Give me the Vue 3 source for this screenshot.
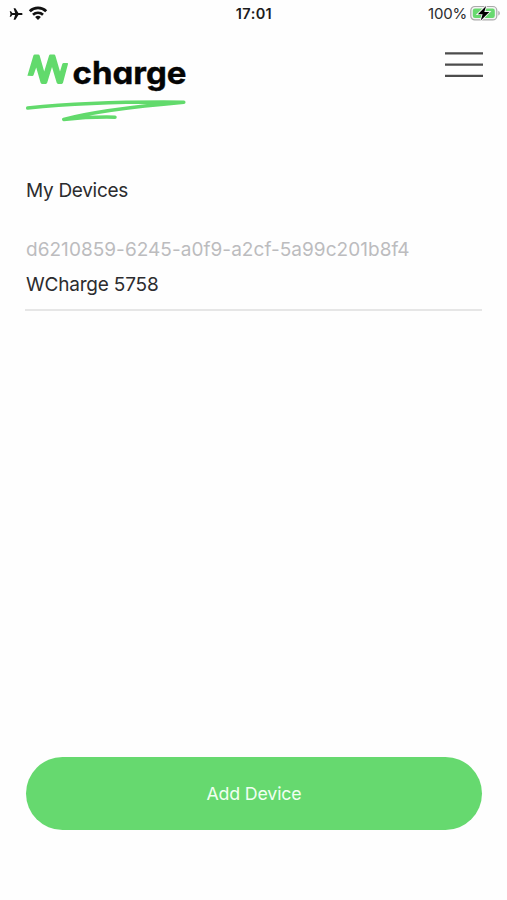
<template>
  <div class="screen">
    <header class="status-bar">
      <div class="status-left">
        <svg width="14" height="14" viewBox="0 0 14 14">
          <path
            d="M13.6 7c0 .7-.7 1.1-1.5 1.1H9.4l-3 4.6H4.6L6.1 8.1H3.3L2 9.7H.7L1.5 7 .7 4.3H2l1.3 1.6h2.8L4.6 1.3h1.8l3 4.6h2.7c.8 0 1.5.4 1.5 1.1z"
            fill="#111"
          />
        </svg>
        <svg width="20" height="15" viewBox="0 0 20 15">
          <path d="M1.8 5.2a11.8 11.8 0 0 1 16.4 0" fill="none" stroke="#111" stroke-width="2.8" />
          <path d="M5 8.7a7.2 7.2 0 0 1 10 0" fill="none" stroke="#111" stroke-width="2.6" />
          <path d="M10 14 7.1 11.1a4.1 4.1 0 0 1 5.8 0z" fill="#111" />
        </svg>
      </div>
      <div class="status-time">17:01</div>
      <div class="status-right">
        <span class="battery-text">100%</span>
        <svg width="31" height="17" viewBox="0 0 31 17">
          <rect x=".8" y="1.5" width="26" height="13.4" rx="4" fill="#f4f4f4" stroke="#aaa" stroke-width="1.2" />
          <rect x="2.8" y="3.5" width="22" height="9.4" rx="2.2" fill="#68d96f" />
          <path d="M28.3 5.8c2 .8 2 4 0 4.8z" fill="#aaa" />
          <path
            d="M16.1 1 7.9 9.2h4.7l-1.9 6.4 8.6-8.6h-5z"
            fill="#000"
            stroke="#f4f4f4"
            stroke-width="1.8"
            paint-order="stroke"
          />
        </svg>
      </div>
    </header>

    <nav class="top-bar">
      <svg class="logo" width="164" height="76" viewBox="0 0 164 76">
        <path
          d="M3.4 28.8 9.4 8.6Q9.7 7.6 10.8 7.6H14.2Q15.4 7.6 15.7 8.7L20.2 24.5 25 8.7Q25.3 7.6 26.4 7.6H30Q31.1 7.6 31.4 8.7L36 24.5 38.3 17Q38.6 16 39.7 16H43.2Q44.3 16 44 17.1L39 35.8Q38.7 36.9 37.6 36.9H34.2Q33 36.9 32.7 35.8L28 20 23.2 35.8Q22.9 36.9 21.8 36.9H18Q16.9 36.9 16.6 35.8L12.2 20.5 9.6 27.9Q9.3 29 8.2 29z"
          fill="#62da6c"
        />
        <text class="logo-text" x="48.5" y="37.3" textLength="114" lengthAdjust="spacingAndGlyphs">charge</text>
        <path
          d="M3.7 61C40 57.4 100 54.6 159.8 55.2 122 58.5 72 63.5 39.7 72.4 57 70.6 72 69.8 91 70.2"
          fill="none"
          stroke="#62da6c"
          stroke-width="3.5"
          stroke-linecap="round"
          stroke-linejoin="round"
        />
      </svg>
      <button class="menu-btn" aria-label="Menu">
        <svg width="38" height="28" viewBox="0 0 38 28">
          <path d="M0 2.3H38M0 13.6H38M0 24.9H38" stroke="#4c4c4c" stroke-width="2.2" />
        </svg>
      </button>
    </nav>

    <main class="content">
      <h1 class="title">My Devices</h1>
      <ul class="devices">
        <li v-for="device in devices" :key="device.id" class="device">
          <div class="device-id">{{ device.id }}</div>
          <div class="device-name">{{ device.name }}</div>
        </li>
      </ul>
    </main>

    <footer class="footer">
      <button class="add-btn">Add Device</button>
    </footer>
  </div>
</template>

<script setup>
import { ref } from 'vue'

const devices = ref([
  { id: 'd6210859-6245-a0f9-a2cf-5a99c201b8f4', name: 'WCharge 5758' }
])
</script>

<style>
body {
  margin: 0;
  background: #fefefe;
}
</style>

<style scoped>
.screen {
  display: flex;
  flex-direction: column;
  box-sizing: border-box;
  height: 900px;
  font-family: Inter, "Liberation Sans", sans-serif;
  color: #2c2c2e;
}
.status-bar {
  display: grid;
  grid-template-columns: 1fr auto 1fr;
  align-items: center;
  height: 27px;
  padding: 0 6px 0 9px;
  font-size: 15px;
  line-height: 18px;
}
.status-left {
  display: flex;
  align-items: center;
  gap: 5px;
}
.status-left svg:last-child {
  margin-top: -1px;
}
.status-time {
  margin-right: 2px;
  font-weight: 600;
  font-size: 14.5px;
  letter-spacing: 0.4px;
  color: #1c1c1c;
}
.status-right {
  display: flex;
  justify-content: flex-end;
  align-items: center;
  gap: 3px;
}
.battery-text {
  letter-spacing: -0.2px;
}
.top-bar {
  display: flex;
  justify-content: space-between;
  align-items: flex-start;
  padding: 20px 24px 0;
}
.logo {
  display: block;
}
.logo-text {
  font-size: 31.5px;
  font-weight: 700;
  font-feature-settings: "cv11";
  fill: #050505;
  stroke: #050505;
  stroke-width: 0.4px;
}
.menu-btn {
  display: flex;
  margin-top: 4px;
  padding: 0;
  border: none;
  background: none;
}
.content {
  flex: 1;
  padding: 56px 25px 0;
}
.title {
  margin: 0 0 0 1px;
  font-size: 19px;
  font-weight: 400;
  line-height: 24px;
  letter-spacing: -0.3px;
}
.devices {
  margin: 35px 0 0;
  padding: 0;
  list-style: none;
}
.device {
  padding: 0 0 12px 1px;
  border-bottom: 2px solid #e6e6e6;
  font-size: 19px;
  line-height: 24px;
  letter-spacing: -0.2px;
}
.device-id {
  margin-bottom: 11px;
  color: #bcbcbe;
  letter-spacing: 0.04px;
}
.footer {
  padding: 0 25px 70px 26px;
}
.add-btn {
  display: block;
  width: 100%;
  height: 73px;
  border: none;
  border-radius: 37px;
  background: #66d96f;
  color: #f0fff1;
  font-family: inherit;
  font-size: 17.8px;
  letter-spacing: -0.16px;
}
</style>
